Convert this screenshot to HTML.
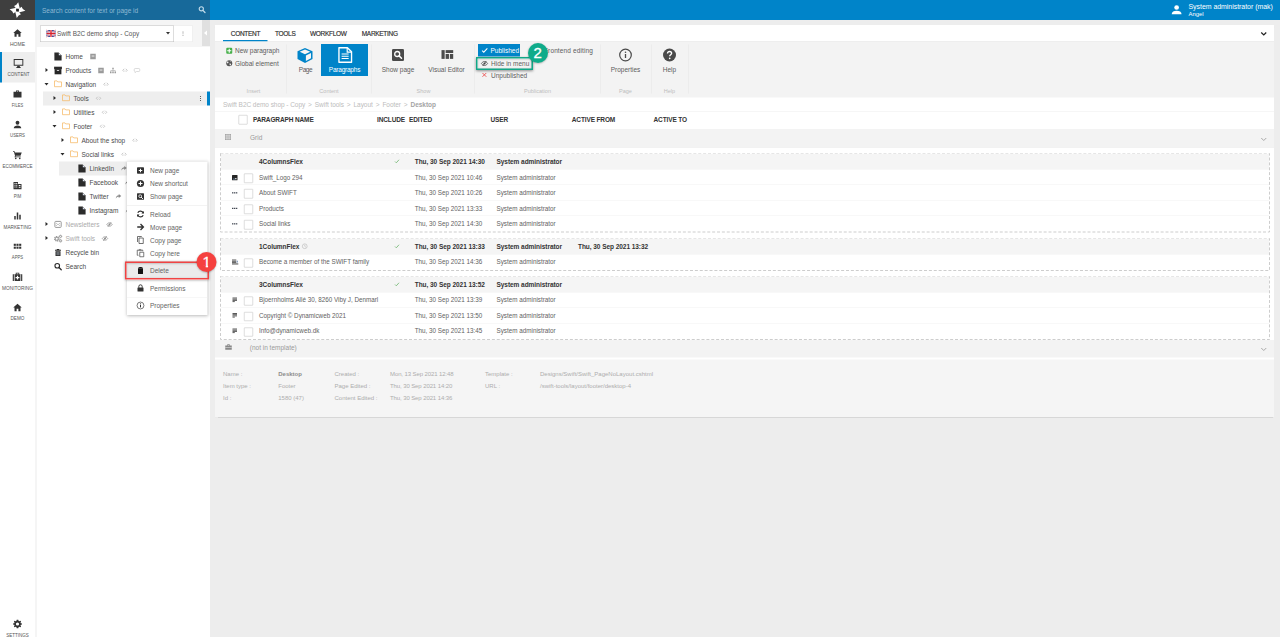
<!DOCTYPE html>
<html lang="en">
<head>
<meta charset="utf-8">
<title>Dynamicweb - Content</title>
<style>

html,body{margin:0;padding:0;overflow:hidden;background:#ededed;width:1280px;height:637px}
#root{position:absolute;left:0;top:0;width:2560px;height:1274px;transform:scale(.5);transform-origin:0 0;font:13px "Liberation Sans",sans-serif;color:#555;overflow:hidden;background:#ededed}
#root *{box-sizing:border-box}
.abs{position:absolute}
svg{display:block;overflow:visible}
/* top bar */
#topbar{position:absolute;left:0;top:0;width:2560px;height:40px;background:#0084c9}
#logo{position:absolute;left:0;top:0;width:70px;height:40px;background:#3f3f3f}
#search{position:absolute;left:70px;top:0;width:350px;height:40px;background:#17699a}
#search span{position:absolute;left:14px;top:13px;font-size:13px;color:#8fb9d3;white-space:nowrap}
#user{position:absolute;left:2377px;top:4px;color:#fff;white-space:nowrap}
#user .n{position:absolute;left:0;top:0;font-size:13.9px;letter-spacing:-.05px}
#user .s{position:absolute;left:0;top:16.5px;font-size:11.8px}
/* nav */
#nav{position:absolute;left:0;top:40px;width:72.5px;height:1234px;background:#fff;border-right:2.5px solid #ebebeb;z-index:2}
.ni{position:absolute;left:0;width:70px;height:61px}
.ni.sel{background:#eee;border-left:4px solid #0084c9}
.ni svg{position:absolute;left:25px;top:13px;width:20px;height:20px}
.ni.sel svg{left:23px}
.ni b{position:absolute;left:0;width:70px;top:39px;line-height:12px;text-align:center;font-weight:400;font-size:10.4px;color:#555;letter-spacing:0}
.ni.sel b{left:0;width:66px}
/* tree panel */
#tree{position:absolute;left:71px;top:40px;width:349px;height:1234px;background:#fff}
#treehead{position:absolute;left:0;top:0;width:349px;height:54px;background:#f5f5f5}
#sel{position:absolute;left:9px;top:10.5px;width:268px;height:33px;background:#fff;border:1px solid #bbb}
#sel span{position:absolute;left:33px;top:8px;white-space:nowrap;color:#555;font-size:12.8px}
#selbtn{position:absolute;left:277px;top:10.5px;width:37px;height:33px;background:#fff;border:1px solid #e6e6e6;border-left:0}
#handle{position:absolute;left:333px;top:0;width:16px;height:52px;background:#e0e0e0}
.tr{position:absolute;left:0;height:28px;width:347px;white-space:nowrap}
.tr .i{position:absolute;top:6px}
.tr .a{position:absolute;width:0;height:0}
.tr .a.r{top:8.7px;border-left:5px solid #2a2a2a;border-top:4.5px solid transparent;border-bottom:4.5px solid transparent}
.tr .a.d{top:11px;border-top:5px solid #2a2a2a;border-left:4.5px solid transparent;border-right:4.5px solid transparent;margin-left:-2px}
.tr .l{position:absolute;top:0;height:28px;display:flex;align-items:center;font-size:13px;color:#4a4a4a}
.tr.dim .l{color:#aaa}
.tr .l svg{margin-left:12px;flex:none}
.tr .l span+svg{margin-left:14px}
.hl{position:absolute;background:#eee;height:28px}

/* main card */
#card{position:absolute;left:430px;top:50px;width:2118px;height:784px;background:#fff;box-shadow:0 1px 1.5px rgba(0,0,0,.09)}
#tabs{position:absolute;left:0;top:0;width:2118px;height:33px;border-bottom:1.5px solid #d2d2d2}
#tabs span{position:absolute;top:9px;font-size:13px;color:#2e2e2e;white-space:nowrap;letter-spacing:-.6px;-webkit-text-stroke:.3px #2e2e2e}
#tabs i{position:absolute;left:16px;top:30px;width:89px;height:3px;background:#0084c9}
#ribbon{position:absolute;left:0;top:33px;width:2118px;height:112px;background:#f3f3f3}
#ribbon .dv{position:absolute;top:6px;width:1px;height:98px;background:#e4e4e4}
#ribbon .gl{position:absolute;top:91.5px;font-size:11px;color:#bdbdbd;white-space:nowrap;transform:translateX(-50%)}
#ribbon .sm{position:absolute;font-size:13px;color:#5c5c5c;white-space:nowrap}
#ribbon .bl{position:absolute;top:49px;font-size:13px;color:#5c5c5c;white-space:nowrap;transform:translateX(-50%)}
#bc{position:absolute;left:16px;top:152px;font-size:13px;color:#bcbcbc;letter-spacing:-.1px;white-space:nowrap;word-spacing:0}
#bc b{color:#a4a4a4}
#bc i{font-style:normal;margin:0 2.4px}
.hline{position:absolute;left:0;width:2118px;height:1px;background:#ececec}
#th span{position:absolute;top:182px;font-size:13px;font-weight:700;color:#333;white-space:nowrap;letter-spacing:-.25px}
.cb{position:absolute;width:18px;height:18.5px;border:1.6px solid #bcbcbc;background:#fff;border-radius:1px}
.band{position:absolute;left:0;width:2118px;background:#f3f3f3}
.band span{position:absolute;font-size:13px;color:#9a9a9a;white-space:nowrap}
.box{position:absolute;left:10px;width:2100px}
.box .bd{position:absolute;left:0;top:0;width:100%;height:100%}
.row{position:absolute;left:2px;right:2px;height:31px;white-space:nowrap;font-size:12.6px;color:#626262}
.row.h{background:linear-gradient(#fff 0,#fff 1.5px,#f5f5f5 1.5px);font-weight:700;color:#333;font-size:13px;letter-spacing:-.1px}
.row+.row{border-top:1px solid #f0f0f0}
.row span{position:absolute;top:8.4px}
.row .c1{left:76px}
.row .c2{left:387.5px}
.row .c3{left:551px}
.row .c4{left:714px}
.row .cb{left:46.3px;top:8px}
.row svg{position:absolute}
#info{position:absolute;left:0;top:668.5px;width:2118px;height:115.5px;background:#f5f5f5;font-size:12px;color:#adadad}
#info span{position:absolute;white-space:nowrap}
#info b{color:#8c8c8c}

/* context menu */
#menu{position:absolute;left:254px;top:323px;width:160.5px;height:307px;background:#fff;box-shadow:0 1px 7px rgba(0,0,0,.28);border-radius:1px}
.mi{position:absolute;left:0;width:100%;height:26px;white-space:nowrap}
.mi svg{position:absolute;left:19px;top:4.5px}
.mi span{position:absolute;left:46px;top:5.5px;font-size:13px;color:#646464}
.ms{position:absolute;left:0;width:100%;height:1px;background:#e6e6e6}

</style>
</head>
<body>
<div id="root">

<!-- ================= TOP BAR ================= -->
<div id="topbar">
  <div id="logo">
    <svg class="abs" style="left:0;top:0" width="70" height="40" viewBox="0 0 70 40"><g transform="translate(35,20.2) rotate(4)" fill="#fff"><path d="M0.4 -15.8 L-3 -10.5 L-7.4 -7.6 L-2.4 -2.4 L4.6 -2.8 Z"/><path d="M0.4 -15.8 L-3 -10.5 L-7.4 -7.6 L-2.4 -2.4 L4.6 -2.8 Z" transform="rotate(90)"/><path d="M0.4 -15.8 L-3 -10.5 L-7.4 -7.6 L-2.4 -2.4 L4.6 -2.8 Z" transform="rotate(180)"/><path d="M0.4 -15.8 L-3 -10.5 L-7.4 -7.6 L-2.4 -2.4 L4.6 -2.8 Z" transform="rotate(270)"/><rect x="-2.4" y="-2.4" width="4.8" height="4.8" fill="#222"/></g></svg>
  </div>
  <div id="search"><span>Search content for text or page id</span>
    <svg class="abs" style="left:327px;top:11.5px" width="14" height="14" viewBox="0 0 14 14"><circle cx="5.6" cy="5.6" r="4.2" fill="none" stroke="#c2dbea" stroke-width="2.2"/><path d="M8.8 8.8 L13 13" stroke="#c2dbea" stroke-width="2.6" stroke-linecap="round"/></svg>
  </div>
  <svg class="abs" style="left:2342px;top:8px" width="22.5" height="22.5" viewBox="0 0 24 24"><circle cx="12" cy="7.5" r="5" fill="#fff"/><path d="M1.5 22 C1.5 16.5 6 14.5 12 14.5 C18 14.5 22.5 16.5 22.5 22 Z" fill="#fff"/></svg>
  <div id="user"><span class="n">System administrator (mak)</span><span class="s">Angel</span></div>
</div>

<!-- ================= LEFT NAV ================= -->
<div id="nav">
  <div class="ni" style="top:3px"><svg viewBox="0 0 20 20"><path d="M10 2.5 L1.5 10 H4 V17.5 H8.2 V12.5 H11.8 V17.5 H16 V10 H18.5 Z" fill="#333"/></svg><b style="transform:scaleX(0.962)">HOME</b></div>
  <div class="ni sel" style="top:64px"><svg viewBox="0 0 20 20"><path d="M0.4 1.2 H19.6 V14.6 H0.4 Z M2.3 3.1 V12.7 H17.7 V3.1 Z" fill="#333" fill-rule="evenodd"/><path d="M8 14.6 H12 L13.4 17.4 H6.6 Z M5.4 17.3 H14.6 V18.8 H5.4 Z" fill="#333"/></svg><b style="transform:scaleX(0.872)">CONTENT</b></div>
  <div class="ni" style="top:125px"><svg viewBox="0 0 20 20"><path d="M7 3 H13 V5.5 H18 V17 H2 V5.5 H7 Z M8.6 4.6 V5.5 H11.4 V4.6 Z" fill="#333" fill-rule="evenodd"/></svg><b style="transform:scaleX(0.782)">FILES</b></div>
  <div class="ni" style="top:186px"><svg viewBox="0 0 20 20"><circle cx="10" cy="6.5" r="3.8" fill="#333"/><path d="M2.5 17.5 C2.5 13.5 6 12 10 12 C14 12 17.5 13.5 17.5 17.5 Z" fill="#333"/></svg><b style="transform:scaleX(0.836)">USERS</b></div>
  <div class="ni" style="top:247px"><svg viewBox="0 0 20 20"><path d="M1 2.5 H4.2 L5 5 H18.5 L16 11.5 H6.5 L6 13 H16.5 V14.5 H4 L5 11.5 L3 4 H1 Z" fill="#333"/><circle cx="6.5" cy="16.8" r="1.6" fill="#333"/><circle cx="14.5" cy="16.8" r="1.6" fill="#333"/></svg><b style="transform:scaleX(0.873)">ECOMMERCE</b></div>
  <div class="ni" style="top:308px"><svg viewBox="0 0 20 20"><path d="M2 3 H11 V7 H18 V17.5 H2 Z" fill="#333"/><g fill="#fff"><rect x="4" y="5" width="2" height="2"/><rect x="7.5" y="5" width="2" height="2"/><rect x="4" y="8.5" width="2" height="2"/><rect x="7.5" y="8.5" width="2" height="2"/><rect x="4" y="12" width="2" height="2"/><rect x="7.5" y="12" width="2" height="2"/><rect x="12.5" y="9" width="3.5" height="2"/><rect x="12.5" y="12.5" width="3.5" height="2"/></g></svg><b style="transform:scaleX(0.81)">PIM</b></div>
  <div class="ni" style="top:369px"><svg viewBox="0 0 20 20"><rect x="3.5" y="10" width="3" height="7" fill="#333"/><rect x="8.5" y="3" width="3" height="14" fill="#333"/><rect x="13.5" y="7.5" width="3" height="9.5" fill="#333"/></svg><b style="transform:scaleX(0.91)">MARKETING</b></div>
  <div class="ni" style="top:430px"><svg viewBox="0 0 20 20"><g fill="#333"><rect x="2.5" y="4.5" width="4.2" height="4.2"/><rect x="7.9" y="4.5" width="4.2" height="4.2"/><rect x="13.3" y="4.5" width="4.2" height="4.2"/><rect x="2.5" y="10.3" width="4.2" height="4.2"/><rect x="7.9" y="10.3" width="4.2" height="4.2"/><rect x="13.3" y="10.3" width="4.2" height="4.2"/></g></svg><b style="transform:scaleX(0.814)">APPS</b></div>
  <div class="ni" style="top:491px"><svg viewBox="0 0 20 20"><path d="M6.5 1.5 H13.5 V4.5 H19.5 V18 H0.5 V4.5 H6.5 Z M8.2 3.2 V4.5 H11.8 V3.2 Z" fill="#333" fill-rule="evenodd"/><rect x="2.8" y="4.5" width="1.4" height="13.5" fill="#fff"/><rect x="15.8" y="4.5" width="1.4" height="13.5" fill="#fff"/><path d="M8.8 7.4 H11.2 V10 H13.8 V12.4 H11.2 V15 H8.8 V12.4 H6.2 V10 H8.8 Z" fill="#fff"/></svg><b style="transform:scaleX(0.924)">MONITORING</b></div>
  <div class="ni" style="top:552px"><svg viewBox="0 0 20 20"><path d="M10 2.5 L1.5 10 H4 V17.5 H8.2 V12.5 H11.8 V17.5 H16 V10 H18.5 Z" fill="#333"/></svg><b style="transform:scaleX(0.897)">DEMO</b></div>
  <div class="ni" style="top:1185px"><svg viewBox="0 0 20 20"><path d="M10 1.5 L11.6 1.6 L12.3 4 L13.8 4.6 L16 3.4 L17.2 4.6 L16 6.8 L16.6 8.3 L19 9 V11 L16.6 11.7 L16 13.2 L17.2 15.4 L16 16.6 L13.8 15.4 L12.3 16 L11.6 18.4 H8.4 L7.7 16 L6.2 15.4 L4 16.6 L2.8 15.4 L4 13.2 L3.4 11.7 L1 11 V9 L3.4 8.3 L4 6.8 L2.8 4.6 L4 3.4 L6.2 4.6 L7.7 4 L8.4 1.6 Z M10 6.8 A3.2 3.2 0 1 0 10 13.2 A3.2 3.2 0 1 0 10 6.8 Z" fill="#333" fill-rule="evenodd"/></svg><b style="transform:scaleX(0.869)">SETTINGS</b></div>
</div>

<!-- ================= TREE PANEL ================= -->
<div id="tree">
  <div id="treehead">
    <div id="sel">
      <svg class="abs" style="left:11.5px;top:8.5px" width="18" height="14" viewBox="0 0 17 13" preserveAspectRatio="none"><rect width="17" height="13" fill="#1b2f8a"/><path d="M0 0 L17 13 M17 0 L0 13" stroke="#fff" stroke-width="2.6"/><path d="M0 0 L17 13 M17 0 L0 13" stroke="#d8202c" stroke-width="1"/><path d="M8.5 0 V13 M0 6.5 H17" stroke="#fff" stroke-width="4.4"/><path d="M8.5 0 V13 M0 6.5 H17" stroke="#d8202c" stroke-width="2.6"/></svg>
      <span>Swift B2C demo shop - Copy</span>
      <i class="abs" style="left:251px;top:12.5px;width:0;height:0;border-top:5px solid #333;border-left:4px solid transparent;border-right:4px solid transparent"></i>
    </div>
    <div id="selbtn"><svg class="abs" style="left:16px;top:10.5px" width="4" height="12" viewBox="0 0 4 12"><circle cx="2" cy="2" r="1.15" fill="#777"/><circle cx="2" cy="5.5" r="1.1" fill="#a5a5a5"/><circle cx="2" cy="9" r="1.1" fill="#a5a5a5"/></svg></div>
    <div id="handle"><i class="abs" style="left:4px;top:21px;width:0;height:0;border-right:6px solid #fff;border-top:5px solid transparent;border-bottom:5px solid transparent"></i></div>
  </div>
  <div class="hl" style="left:15px;top:143px;width:328px"></div>
  <div class="abs" style="left:343px;top:143px;width:6px;height:28px;background:#0084c9"></div>
  <svg class="abs" style="left:328px;top:151px" width="4" height="12" viewBox="0 0 4 12"><circle cx="2" cy="2" r="1.1" fill="#444"/><circle cx="2" cy="6" r="1.1" fill="#444"/><circle cx="2" cy="10" r="1.1" fill="#444"/></svg>
  <div class="hl" style="left:47px;top:283px;width:296px"></div>
  <div class="tr" style="top:59px"><svg class="i" style="left:37px" width="16" height="16" viewBox="0 0 16 16"><path d="M0.8 0 H9.2 L15.2 6 V16.2 H0.8 Z" fill="#2b2b2b"/><path d="M9.6 0.9 V5.7 H14.4 Z" fill="#dfe6f2"/></svg><div class="l" style="left:60px"><span>Home</span><svg width="12" height="12" viewBox="0 0 12 12"><rect x="0.5" y="0.5" width="11" height="11" fill="#9a9a9a"/><rect x="3.2" y="3.2" width="5.6" height="4" fill="#c4c4c4"/></svg></div></div>
  <div class="tr" style="top:87px"><i class="a r" style="left:20px"></i><svg class="i" style="left:37px" width="16" height="16" viewBox="0 0 16 16"><rect x="0.2" y="0.4" width="15.6" height="5" fill="#2b2b2b"/><path d="M1.2 5.2 H14.8 V15.6 H1.2 Z" fill="#262626"/><rect x="5.6" y="7.4" width="4.8" height="1.7" rx=".5" fill="#fff"/></svg><div class="l" style="left:60px"><span>Products</span><svg width="12" height="12" viewBox="0 0 12 12"><rect x="0.5" y="0.5" width="11" height="11" fill="#9a9a9a"/><rect x="3.2" y="3.2" width="5.6" height="4" fill="#c4c4c4"/></svg><svg width="12" height="12" viewBox="0 0 12 12"><g fill="#9a9a9a"><rect x="4.5" y="0.5" width="3" height="3"/><rect x="0" y="8" width="3" height="3.5"/><rect x="4.5" y="8" width="3" height="3.5"/><rect x="9" y="8" width="3" height="3.5"/></g><path d="M6 3.5 V8 M1.5 8 V6 H10.5 V8" fill="none" stroke="#9a9a9a" stroke-width="1"/></svg><svg width="12" height="12" viewBox="0 0 12 12"><path d="M4.3 2.6 L1.5 5.6 L4.3 8.6 M7.7 2.6 L10.5 5.6 L7.7 8.6" fill="none" stroke="#b6b6b6" stroke-width="1.4"/><path d="M4.8 5.6 H7.2" stroke="#d4d4d4" stroke-width="1.2"/></svg><svg width="12" height="12" viewBox="0 0 12 12"><path d="M2.5 2 H9.5 Q11.5 2 11.5 4 V6 Q11.5 8 9.5 8 H5 L2 10.2 V8 Q0.5 7.6 0.5 6 V4 Q0.5 2 2.5 2 Z" fill="none" stroke="#c4c4c4" stroke-width="1.2"/></svg></div></div>
  <div class="tr" style="top:115px"><i class="a d" style="left:20px"></i><svg class="i" style="left:37px" width="16" height="16" viewBox="0 0 16 16"><path d="M1 0.8 H6 L7.5 2.8 H15 V12.4 H1 Z" fill="none" stroke="#f5b866" stroke-width="1.5" stroke-linejoin="round"/></svg><div class="l" style="left:60px"><span>Navigation</span><svg width="12" height="12" viewBox="0 0 12 12"><path d="M4.3 2.6 L1.5 5.6 L4.3 8.6 M7.7 2.6 L10.5 5.6 L7.7 8.6" fill="none" stroke="#b6b6b6" stroke-width="1.4"/><path d="M4.8 5.6 H7.2" stroke="#d4d4d4" stroke-width="1.2"/></svg></div></div>
  <div class="tr" style="top:143px"><i class="a r" style="left:36px"></i><svg class="i" style="left:53px" width="16" height="16" viewBox="0 0 16 16"><path d="M1 0.8 H6 L7.5 2.8 H15 V12.4 H1 Z" fill="none" stroke="#f5b866" stroke-width="1.5" stroke-linejoin="round"/></svg><div class="l" style="left:76px"><span>Tools</span><svg width="12" height="12" viewBox="0 0 12 12"><path d="M4.3 2.6 L1.5 5.6 L4.3 8.6 M7.7 2.6 L10.5 5.6 L7.7 8.6" fill="none" stroke="#b6b6b6" stroke-width="1.4"/><path d="M4.8 5.6 H7.2" stroke="#d4d4d4" stroke-width="1.2"/></svg></div></div>
  <div class="tr" style="top:171px"><i class="a r" style="left:36px"></i><svg class="i" style="left:53px" width="16" height="16" viewBox="0 0 16 16"><path d="M1 0.8 H6 L7.5 2.8 H15 V12.4 H1 Z" fill="none" stroke="#f5b866" stroke-width="1.5" stroke-linejoin="round"/></svg><div class="l" style="left:76px"><span>Utilities</span><svg width="12" height="12" viewBox="0 0 12 12"><path d="M4.3 2.6 L1.5 5.6 L4.3 8.6 M7.7 2.6 L10.5 5.6 L7.7 8.6" fill="none" stroke="#b6b6b6" stroke-width="1.4"/><path d="M4.8 5.6 H7.2" stroke="#d4d4d4" stroke-width="1.2"/></svg></div></div>
  <div class="tr" style="top:199px"><i class="a d" style="left:36px"></i><svg class="i" style="left:53px" width="16" height="16" viewBox="0 0 16 16"><path d="M1 0.8 H6 L7.5 2.8 H15 V12.4 H1 Z" fill="none" stroke="#f5b866" stroke-width="1.5" stroke-linejoin="round"/></svg><div class="l" style="left:76px"><span>Footer</span><svg width="12" height="12" viewBox="0 0 12 12"><path d="M4.3 2.6 L1.5 5.6 L4.3 8.6 M7.7 2.6 L10.5 5.6 L7.7 8.6" fill="none" stroke="#b6b6b6" stroke-width="1.4"/><path d="M4.8 5.6 H7.2" stroke="#d4d4d4" stroke-width="1.2"/></svg></div></div>
  <div class="tr" style="top:227px"><i class="a r" style="left:52px"></i><svg class="i" style="left:69px" width="16" height="16" viewBox="0 0 16 16"><path d="M1 0.8 H6 L7.5 2.8 H15 V12.4 H1 Z" fill="none" stroke="#f5b866" stroke-width="1.5" stroke-linejoin="round"/></svg><div class="l" style="left:92px"><span>About the shop</span><svg width="12" height="12" viewBox="0 0 12 12"><path d="M4.3 2.6 L1.5 5.6 L4.3 8.6 M7.7 2.6 L10.5 5.6 L7.7 8.6" fill="none" stroke="#b6b6b6" stroke-width="1.4"/><path d="M4.8 5.6 H7.2" stroke="#d4d4d4" stroke-width="1.2"/></svg></div></div>
  <div class="tr" style="top:255px"><i class="a d" style="left:52px"></i><svg class="i" style="left:69px" width="16" height="16" viewBox="0 0 16 16"><path d="M1 0.8 H6 L7.5 2.8 H15 V12.4 H1 Z" fill="none" stroke="#f5b866" stroke-width="1.5" stroke-linejoin="round"/></svg><div class="l" style="left:92px"><span>Social links</span><svg width="12" height="12" viewBox="0 0 12 12"><path d="M4.3 2.6 L1.5 5.6 L4.3 8.6 M7.7 2.6 L10.5 5.6 L7.7 8.6" fill="none" stroke="#b6b6b6" stroke-width="1.4"/><path d="M4.8 5.6 H7.2" stroke="#d4d4d4" stroke-width="1.2"/></svg></div></div>
  <div class="tr" style="top:283px"><svg class="i" style="left:85px" width="16" height="16" viewBox="0 0 16 16"><path d="M0.8 0 H9.2 L15.2 6 V16.2 H0.8 Z" fill="#2b2b2b"/><path d="M9.6 0.9 V5.7 H14.4 Z" fill="#dfe6f2"/></svg><div class="l" style="left:108px"><span>LinkedIn</span><svg width="12" height="12" viewBox="0 0 12 12"><path d="M6.5 1 L11.5 5 L6.5 9 V6.6 C3.5 6.6 1.8 7.6 0.6 10.5 C0.6 6 3 3.7 6.5 3.4 Z" fill="#8a8a8a"/></svg></div></div>
  <div class="tr" style="top:311px"><svg class="i" style="left:85px" width="16" height="16" viewBox="0 0 16 16"><path d="M0.8 0 H9.2 L15.2 6 V16.2 H0.8 Z" fill="#2b2b2b"/><path d="M9.6 0.9 V5.7 H14.4 Z" fill="#dfe6f2"/></svg><div class="l" style="left:108px"><span>Facebook</span><svg width="12" height="12" viewBox="0 0 12 12"><path d="M6.5 1 L11.5 5 L6.5 9 V6.6 C3.5 6.6 1.8 7.6 0.6 10.5 C0.6 6 3 3.7 6.5 3.4 Z" fill="#8a8a8a"/></svg></div></div>
  <div class="tr" style="top:339px"><svg class="i" style="left:85px" width="16" height="16" viewBox="0 0 16 16"><path d="M0.8 0 H9.2 L15.2 6 V16.2 H0.8 Z" fill="#2b2b2b"/><path d="M9.6 0.9 V5.7 H14.4 Z" fill="#dfe6f2"/></svg><div class="l" style="left:108px"><span>Twitter</span><svg width="12" height="12" viewBox="0 0 12 12"><path d="M6.5 1 L11.5 5 L6.5 9 V6.6 C3.5 6.6 1.8 7.6 0.6 10.5 C0.6 6 3 3.7 6.5 3.4 Z" fill="#8a8a8a"/></svg></div></div>
  <div class="tr" style="top:367px"><svg class="i" style="left:85px" width="16" height="16" viewBox="0 0 16 16"><path d="M0.8 0 H9.2 L15.2 6 V16.2 H0.8 Z" fill="#2b2b2b"/><path d="M9.6 0.9 V5.7 H14.4 Z" fill="#dfe6f2"/></svg><div class="l" style="left:108px"><span>Instagram</span><svg width="12" height="12" viewBox="0 0 12 12"><path d="M6.5 1 L11.5 5 L6.5 9 V6.6 C3.5 6.6 1.8 7.6 0.6 10.5 C0.6 6 3 3.7 6.5 3.4 Z" fill="#8a8a8a"/></svg></div></div>
  <div class="tr dim" style="top:395px"><i class="a r" style="left:20px"></i><svg class="i" style="left:37px" width="16" height="16" viewBox="0 0 16 16"><rect x="1.8" y="1.8" width="12.6" height="12" rx="1.6" fill="none" stroke="#9a9a9a" stroke-width="2"/><path d="M4 5 L8.1 8.6 L12.2 5 M4 11 L6.6 8.2 M12.2 11 L9.6 8.2" fill="none" stroke="#a8a8a8" stroke-width="1.3"/></svg><div class="l" style="left:60px"><span>Newsletters</span><svg width="12" height="12" viewBox="0 0 12 12"><path d="M0.6 6 C2.3 3.2 4 2.6 6 2.6 C8 2.6 9.7 3.2 11.4 6 C9.7 8.8 8 9.4 6 9.4 C4 9.4 2.3 8.8 0.6 6 Z" fill="none" stroke="#8c8c8c" stroke-width="1.4"/><circle cx="6" cy="6" r="2" fill="#8c8c8c"/><path d="M2.6 10.6 L9.4 1.4" stroke="#8c8c8c" stroke-width="1.4"/></svg></div></div>
  <div class="tr dim" style="top:423px"><i class="a r" style="left:20px"></i><svg class="i" style="left:37px" width="16" height="16" viewBox="0 0 16 16"><circle cx="5.6" cy="8.6" r="4.4" fill="none" stroke="#8e8e8e" stroke-width="2.2" stroke-dasharray="2.3 1.15"/><circle cx="5.6" cy="8.6" r="2.9" fill="none" stroke="#8e8e8e" stroke-width="1.7"/><circle cx="13" cy="3.8" r="2" fill="none" stroke="#8e8e8e" stroke-width="1.7"/><circle cx="13" cy="12.6" r="2" fill="none" stroke="#8e8e8e" stroke-width="1.7"/><circle cx="13" cy="3.8" r="2.9" fill="none" stroke="#8e8e8e" stroke-width="1" stroke-dasharray="1.2 1.1"/><circle cx="13" cy="12.6" r="2.9" fill="none" stroke="#8e8e8e" stroke-width="1" stroke-dasharray="1.2 1.1"/></svg><div class="l" style="left:60px"><span>Swift tools</span><svg width="12" height="12" viewBox="0 0 12 12"><path d="M0.6 6 C2.3 3.2 4 2.6 6 2.6 C8 2.6 9.7 3.2 11.4 6 C9.7 8.8 8 9.4 6 9.4 C4 9.4 2.3 8.8 0.6 6 Z" fill="none" stroke="#8c8c8c" stroke-width="1.4"/><circle cx="6" cy="6" r="2" fill="#8c8c8c"/><path d="M2.6 10.6 L9.4 1.4" stroke="#8c8c8c" stroke-width="1.4"/></svg></div></div>
  <div class="tr" style="top:451px"><svg class="i" style="left:37px" width="16" height="16" viewBox="0 0 16 16"><path d="M5.5 1 H10.5 V2.5 H14 V4.5 H2 V2.5 H5.5 Z" fill="#2b2b2b"/><path d="M3 5.5 H13 V15 H3 Z" fill="#2b2b2b"/><path d="M6 7 V13.5 M8 7 V13.5 M10 7 V13.5" stroke="#a9b4bc" stroke-width="1.2"/></svg><div class="l" style="left:60px"><span>Recycle bin</span></div></div>
  <div class="tr" style="top:479px"><svg class="i" style="left:37px" width="16" height="16" viewBox="0 0 16 16"><circle cx="6.5" cy="6.5" r="4.6" fill="none" stroke="#2b2b2b" stroke-width="2.2"/><path d="M10 10 L14.5 14.5" stroke="#2b2b2b" stroke-width="2.6" stroke-linecap="round"/></svg><div class="l" style="left:60px"><span>Search</span></div></div>
</div>


<!-- ================= MAIN CARD ================= -->
<div id="card">
  <div id="tabs">
    <span style="left:31.5px">CONTENT</span><span style="left:120px">TOOLS</span><span style="left:190px">WORKFLOW</span><span style="left:293.5px">MARKETING</span>
    <i></i>
    <svg class="abs" style="left:2091px;top:13px" width="13" height="9" viewBox="0 0 13 9"><path d="M1.5 2 L6.5 7 L11.5 2" fill="none" stroke="#222" stroke-width="2.4"/></svg>
  </div>
  
  <div id="ribbon">
    <svg class="abs" style="left:22px;top:12px" width="13" height="13" viewBox="0 0 13 13"><rect x="0.5" y="0.5" width="12" height="12" rx="2" fill="#46b04a"/><path d="M6.5 2.6 V10.4 M2.4 6.5 H10.6" stroke="#fff" stroke-width="2.2"/></svg><span class="sm" style="left:40px;top:11px">New paragraph</span>
    <svg class="abs" style="left:22px;top:37px" width="13" height="13" viewBox="0 0 13 13"><circle cx="6.5" cy="6.5" r="6" fill="#555"/><path d="M3 2.5 C5 3 5.5 4.5 4.5 6 C3.8 7 2.5 6.8 1.5 6 M7.5 1.5 C8 3.5 10 3.5 11 3 M7 7 C8.5 6.5 10.5 7.5 10 9.5 C9.5 11 8 11.5 7.5 10 C7.2 9 6.5 8 7 7 Z" fill="#f3f3f3"/></svg><span class="sm" style="left:40px;top:36px">Global element</span>
    <span class="gl" style="left:77px">Insert</span>
    <i class="dv" style="left:143px"></i>
    <svg class="abs" style="left:164px;top:12px" width="32" height="32" viewBox="0 0 32 32"><path d="M16 0.8 L31 7.4 V23 L16 31 L1 23 V7.4 Z" fill="#0084c9"/><path d="M16 3.8 L26.6 8.4 L16 13.4 L5.4 8.4 Z" fill="#f6f6f6"/><path d="M17.8 16.2 L28 11.2 V21.6 L17.8 27.2 Z" fill="#f6f6f6"/></svg><span class="bl" style="left:181px;letter-spacing:-.8px">Page</span>
    <div class="abs" style="left:212px;top:5px;width:94px;height:64px;background:#0084c9"></div>
    <svg class="abs" style="left:245.5px;top:11px" width="29" height="32" viewBox="0 0 29 33"><path d="M1.5 1.5 H19 L27.5 10 V31.5 H1.5 Z" fill="none" stroke="#fff" stroke-width="2.8" stroke-linejoin="round"/><path d="M18.5 2 V10.5 H27" fill="none" stroke="#fff" stroke-width="2.4"/><path d="M7 14.5 H21.5 M7 19.2 H21.5 M7 23.9 H21.5" stroke="#fff" stroke-width="2.2"/></svg><span class="bl" style="left:259px;color:#fff;letter-spacing:-.45px">Paragraphs</span>
    <span class="gl" style="left:228px">Content</span>
    <i class="dv" style="left:313px"></i>
    <svg class="abs" style="left:354px;top:15px" width="24" height="24" viewBox="0 0 24 24"><rect x="0" y="0" width="24" height="24" rx="2.5" fill="#4a4a4a"/><circle cx="10.4" cy="10" r="5" fill="none" stroke="#fff" stroke-width="2.6"/><path d="M14.2 13.8 L19 18.6" stroke="#fff" stroke-width="3" stroke-linecap="round"/></svg><span class="bl" style="left:366px">Show page</span>
    <svg class="abs" style="left:453px;top:17px" width="23.4" height="18" viewBox="0 0 24 18"><g fill="#4a4a4a"><rect x="0" y="0" width="6.5" height="18"/><rect x="8.5" y="0" width="15.5" height="6"/><rect x="8.5" y="8" width="6.8" height="10"/><rect x="17.2" y="8" width="6.8" height="10"/></g></svg><span class="bl" style="left:463px">Visual Editor</span>
    <span class="gl" style="left:417px">Show</span>
    <i class="dv" style="left:518px"></i>
    <div class="abs" style="left:526px;top:5px;width:84px;height:25px;background:#0084c9"></div>
    <svg class="abs" style="left:533px;top:12px" width="13.5" height="11" viewBox="0 0 12 10"><path d="M1 5.5 L4 8.5 L10.5 1.5" fill="none" stroke="#fff" stroke-width="1.9"/></svg><span class="sm" style="left:551px;top:11px;color:#fff">Published</span>
    <svg class="abs" style="left:532px;top:38px" width="14" height="12" viewBox="0 0 14 12"><path d="M0.8 6 C3 2.6 5 2 7 2 C9 2 11 2.6 13.2 6 C11 9.4 9 10 7 10 C5 10 3 9.4 0.8 6 Z" fill="none" stroke="#444" stroke-width="1.5"/><circle cx="7" cy="6" r="2.2" fill="#444"/><path d="M3.4 11 L10.6 1" stroke="#444" stroke-width="1.5"/></svg><span class="sm" style="left:552px;top:36px">Hide in menu</span>
    <svg class="abs" style="left:534px;top:62px" width="9.5" height="9.5" viewBox="0 0 10 10"><path d="M1 1 L9 9 M9 1 L1 9" stroke="#ec5050" stroke-width="1.9"/></svg><span class="sm" style="left:552px;top:60px">Unpublished</span>
    <span class="sm" style="left:658px;top:11px;letter-spacing:.25px">Frontend editing</span>
    <span class="gl" style="left:645px">Publication</span>
    <i class="dv" style="left:770px"></i>
    <svg class="abs" style="left:808px;top:14px" width="26" height="26" viewBox="0 0 26 26"><circle cx="13" cy="13" r="11.6" fill="none" stroke="#4a4a4a" stroke-width="2.4"/><rect x="11.7" y="11" width="2.6" height="8" fill="#4a4a4a"/><circle cx="13" cy="7.6" r="1.6" fill="#4a4a4a"/></svg><span class="bl" style="left:821px">Properties</span>
    <span class="gl" style="left:821px">Page</span>
    <i class="dv" style="left:872px"></i>
    <svg class="abs" style="left:896px;top:14px" width="26" height="26" viewBox="0 0 26 26"><circle cx="13" cy="13" r="13" fill="#4a4a4a"/><path d="M9 10 C9 7.4 10.8 6 13.1 6 C15.5 6 17.2 7.4 17.2 9.6 C17.2 12.6 13.4 12.6 13.4 15.6" fill="none" stroke="#fff" stroke-width="2.8"/><circle cx="13.4" cy="19.6" r="1.7" fill="#fff"/></svg><span class="bl" style="left:909px">Help</span>
    <span class="gl" style="left:909px">Help</span>
    <i class="dv" style="left:947px"></i>
  </div>
  <div id="bc">Swift B2C demo shop - Copy <i>&gt;</i> Swift tools <i>&gt;</i> Layout <i>&gt;</i> Footer <i>&gt;</i> <b>Desktop</b></div>
  <div class="hline" style="top:172px"></div>
  <div id="th">
    <i class="cb" style="left:46.5px;top:180px"></i>
    <span style="left:76px">PARAGRAPH NAME</span><span style="left:324px">INCLUDE</span><span style="left:388px">EDITED</span><span style="left:551px">USER</span><span style="left:713.5px">ACTIVE FROM</span><span style="left:877px">ACTIVE TO</span>
  </div>
  <div class="band" style="top:208px;height:37px;border-bottom:1px solid #ebebeb"><svg class="abs" style="left:20px;top:10px" width="12" height="12" viewBox="0 0 12 12"><rect x="0.6" y="0.6" width="10.8" height="10.8" fill="none" stroke="#999" stroke-width="1.2"/><path d="M0.6 4.2 H11.4 M0.6 7.8 H11.4 M4.2 0.6 V11.4 M7.8 0.6 V11.4" stroke="#999" stroke-width="1"/></svg><span style="left:70px;top:9.5px">Grid</span><svg class="abs" style="left:2090.5px;top:16px" width="13" height="9" viewBox="0 0 13 9"><path d="M1.5 2 L6.5 7 L11.5 2" fill="none" stroke="#9c9c9c" stroke-width="1.7"/></svg></div>
  <div class="box" style="top:256.3px;height:159px"><svg class="bd" width="2100" height="159" viewBox="0 0 2100 159"><rect x="1" y="1" width="2098" height="157" fill="none" stroke="#cdcdcd" stroke-width="2" stroke-dasharray="6 3.75"/></svg>
    <div class="row h" style="top:1px"><span class="c1">4ColumnsFlex</span><svg style="left:347px;top:11px" width="10" height="9" viewBox="0 0 10 9"><path d="M1 5 L3.6 7.6 L9 1.5" fill="none" stroke="#6db56d" stroke-width="1.6"/></svg><span class="c2">Thu, 30 Sep 2021 14:30</span><span class="c3">System administrator</span></div>
    <div class="row" style="top:32px"><svg style="left:22px;top:10.5px" width="11" height="10" viewBox="0 0 11 10"><rect x="0" y="0" width="11" height="10.4" rx="1" fill="#262626"/><path d="M1.6 8.8 L4 5.8 L6 8.8 Z" fill="#6b8cab"/><rect x="6.4" y="6" width="2.6" height="2.6" fill="#f2f2f2"/></svg><i class="cb"></i><span class="c1">Swift_Logo 294</span><span class="c2">Thu, 30 Sep 2021 10:46</span><span class="c3">System administrator</span></div>
    <div class="row" style="top:63px"><svg style="left:22px;top:10.5px" width="11" height="10" viewBox="0 0 11 10"><rect x="0" y="3.6" width="2.8" height="2.2" fill="#303642"/><rect x="3.9" y="3.6" width="2.8" height="2.2" fill="#303642"/><rect x="7.8" y="3.6" width="2.8" height="2.2" fill="#303642"/></svg><i class="cb"></i><span class="c1">About SWIFT</span><span class="c2">Thu, 30 Sep 2021 10:26</span><span class="c3">System administrator</span></div>
    <div class="row" style="top:94px"><svg style="left:22px;top:10.5px" width="11" height="10" viewBox="0 0 11 10"><rect x="0" y="3.6" width="2.8" height="2.2" fill="#303642"/><rect x="3.9" y="3.6" width="2.8" height="2.2" fill="#303642"/><rect x="7.8" y="3.6" width="2.8" height="2.2" fill="#303642"/></svg><i class="cb"></i><span class="c1">Products</span><span class="c2">Thu, 30 Sep 2021 13:33</span><span class="c3">System administrator</span></div>
    <div class="row" style="top:125px"><svg style="left:22px;top:10.5px" width="11" height="10" viewBox="0 0 11 10"><rect x="0" y="3.6" width="2.8" height="2.2" fill="#303642"/><rect x="3.9" y="3.6" width="2.8" height="2.2" fill="#303642"/><rect x="7.8" y="3.6" width="2.8" height="2.2" fill="#303642"/></svg><i class="cb"></i><span class="c1">Social links</span><span class="c2">Thu, 30 Sep 2021 14:30</span><span class="c3">System administrator</span></div>
  </div>
  <div class="box" style="top:425.6px;height:66px"><svg class="bd" width="2100" height="66" viewBox="0 0 2100 66"><rect x="1" y="1" width="2098" height="64" fill="none" stroke="#cdcdcd" stroke-width="2" stroke-dasharray="6 3.75"/></svg>
    <div class="row h" style="top:1px"><span class="c1">1ColumnFlex<svg style="display:inline-block;margin-left:5px;vertical-align:-1px;position:static" width="11" height="11" viewBox="0 0 11 11"><circle cx="5.5" cy="5.5" r="4.8" fill="none" stroke="#aaa" stroke-width="1"/><path d="M5.5 2.5 V5.5 L7.8 7.4" fill="none" stroke="#aaa" stroke-width="1"/></svg></span><svg style="left:347px;top:11px" width="10" height="9" viewBox="0 0 10 9"><path d="M1 5 L3.6 7.6 L9 1.5" fill="none" stroke="#6db56d" stroke-width="1.6"/></svg><span class="c2">Thu, 30 Sep 2021 13:33</span><span class="c3">System administrator</span><span class="c4">Thu, 30 Sep 2021 13:32</span></div>
    <div class="row" style="top:32px"><svg style="left:22px;top:10.5px" width="11" height="10" viewBox="0 0 11 10"><g fill="#5a5a5a"><rect x="0" y="0" width="8.6" height="2"/><rect x="0" y="2.6" width="8.6" height="2"/><rect x="0" y="5.2" width="8.6" height="2"/><rect x="0" y="7.8" width="12.6" height="2.2"/><rect x="9.4" y="2.4" width="2.6" height="3.6" fill="#8aa0c0"/></g></svg><i class="cb"></i><span class="c1">Become a member of the SWIFT family</span><span class="c2">Thu, 30 Sep 2021 14:36</span><span class="c3">System administrator</span></div>
  </div>
  <div class="box" style="top:501.8px;height:128px"><svg class="bd" width="2100" height="128" viewBox="0 0 2100 128"><rect x="1" y="1" width="2098" height="126" fill="none" stroke="#cdcdcd" stroke-width="2" stroke-dasharray="6 3.75"/></svg>
    <div class="row h" style="top:1px"><span class="c1">3ColumnsFlex</span><svg style="left:347px;top:11px" width="10" height="9" viewBox="0 0 10 9"><path d="M1 5 L3.6 7.6 L9 1.5" fill="none" stroke="#6db56d" stroke-width="1.6"/></svg><span class="c2">Thu, 30 Sep 2021 13:52</span><span class="c3">System administrator</span></div>
    <div class="row" style="top:32px"><svg style="left:22px;top:10.5px" width="11" height="10" viewBox="0 0 11 10"><g fill="#5a5a5a"><rect x="1" y="0" width="9" height="2"/><rect x="1" y="2.4" width="9" height="2"/><rect x="1" y="4.8" width="9" height="2"/><rect x="1" y="7.2" width="4.6" height="2"/></g></svg><i class="cb"></i><span class="c1">Bjoernholms Allé 30, 8260 Viby J, Denmarl</span><span class="c2">Thu, 30 Sep 2021 13:39</span><span class="c3">System administrator</span></div>
    <div class="row" style="top:63px"><svg style="left:22px;top:10.5px" width="11" height="10" viewBox="0 0 11 10"><g fill="#5a5a5a"><rect x="1" y="0" width="9" height="2"/><rect x="1" y="2.4" width="9" height="2"/><rect x="1" y="4.8" width="9" height="2"/><rect x="1" y="7.2" width="4.6" height="2"/></g></svg><i class="cb"></i><span class="c1">Copyright © Dynamicweb 2021</span><span class="c2">Thu, 30 Sep 2021 13:50</span><span class="c3">System administrator</span></div>
    <div class="row" style="top:94px"><svg style="left:22px;top:10.5px" width="11" height="10" viewBox="0 0 11 10"><g fill="#5a5a5a"><rect x="1" y="0" width="9" height="2"/><rect x="1" y="2.4" width="9" height="2"/><rect x="1" y="4.8" width="9" height="2"/><rect x="1" y="7.2" width="4.6" height="2"/></g></svg><i class="cb"></i><span class="c1">Info@dynamicweb.dk</span><span class="c2">Thu, 30 Sep 2021 13:45</span><span class="c3">System administrator</span></div>
  </div>
  <div class="band" style="top:629.8px;height:35px"><svg class="abs" style="left:20px;top:8.6px" width="14" height="12" viewBox="0 0 14 12"><path d="M4.5 0.5 H9.5 V3 H13.5 V11.5 H0.5 V3 H4.5 Z M5.8 1.8 V3 H8.2 V1.8 Z" fill="#888" fill-rule="evenodd"/><rect x="0.5" y="6.2" width="13" height="1" fill="#f3f3f3"/></svg><span style="left:69.5px;top:8.5px">(not in template)</span><svg class="abs" style="left:2090.5px;top:14.5px" width="13" height="9" viewBox="0 0 13 9"><path d="M1.5 2 L6.5 7 L11.5 2" fill="none" stroke="#9c9c9c" stroke-width="1.7"/></svg></div>
  <div id="info">
    <span style="left:16px;top:21.5px">Name :</span><span style="left:126.5px;top:21.5px"><b>Desktop</b></span><span style="left:239px;top:21.5px">Created :</span><span style="left:350px;top:21.5px;letter-spacing:-.2px">Mon, 13 Sep 2021 12:48</span><span style="left:540px;top:21.5px">Template :</span><span style="left:650px;top:21.5px">Designs/Swift/Swift_PageNoLayout.cshtml</span>
    <span style="left:16px;top:45.5px">Item type :</span><span style="left:126.5px;top:45.5px">Footer</span><span style="left:239px;top:45.5px">Page Edited :</span><span style="left:350px;top:45.5px;letter-spacing:-.2px">Thu, 30 Sep 2021 14:20</span><span style="left:540px;top:45.5px">URL :</span><span style="left:650px;top:45.5px">/swift-tools/layout/footer/desktop-4</span>
    <span style="left:16px;top:69.5px">Id :</span><span style="left:126.5px;top:69.5px">1580 (47)</span><span style="left:239px;top:69.5px">Content Edited :</span><span style="left:350px;top:69.5px;letter-spacing:-.2px">Thu, 30 Sep 2021 14:36</span>
  </div>
</div>
<!-- annotation 2 -->
<div class="abs" style="left:952px;top:114px;width:114px;height:26px;border:3px solid #12a787;box-shadow:0 1px 5px rgba(0,0,0,.42),inset 0 1px 4px rgba(0,0,0,.3)"></div>
<div class="abs" style="left:1055.5px;top:85.8px;width:40px;height:40px;border-radius:50%;background:#0fab8a;box-shadow:0 1px 4px rgba(0,0,0,.3);color:#fff;font-size:30px;line-height:40px;text-align:center;-webkit-text-stroke:.6px #fff">2</div>


<!-- ================= CONTEXT MENU ================= -->
<div id="menu">
  <div class="abs" style="left:0;top:202.5px;width:100%;height:31px;background:#ebebeb"></div>
  <div class="mi" style="top:5.5px"><svg width="16" height="16" viewBox="0 0 16 16"><rect x="1" y="1.5" width="14" height="13" rx="1.5" fill="#333"/><path d="M8 4.5 V11.5 M4.5 8 H11.5" stroke="#fff" stroke-width="2"/></svg><span>New page</span></div>
  <div class="mi" style="top:31.5px"><svg width="16" height="16" viewBox="0 0 16 16"><circle cx="8" cy="8" r="7.2" fill="#333"/><path d="M8 4 V12 M4 8 H12" stroke="#fff" stroke-width="2.2"/></svg><span>New shortcut</span></div>
  <div class="mi" style="top:57.5px"><svg width="16" height="16" viewBox="0 0 16 16"><rect x="1" y="1.5" width="14" height="13" rx="1" fill="#333"/><circle cx="7.4" cy="7.4" r="2.8" fill="none" stroke="#fff" stroke-width="1.6"/><path d="M9.6 9.6 L12.4 12.4" stroke="#fff" stroke-width="1.9" stroke-linecap="round"/></svg><span>Show page</span></div>
  <div class="mi" style="top:92.5px"><svg width="16" height="16" viewBox="0 0 16 16"><path d="M13.6 6.2 A6 6 0 0 0 2.6 5.4" fill="none" stroke="#333" stroke-width="2.6"/><path d="M2.4 9.8 A6 6 0 0 0 13.4 10.6" fill="none" stroke="#333" stroke-width="2.6"/><path d="M15 1.8 V7 H9.8 Z" fill="#333"/><path d="M1 14.2 V9 H6.2 Z" fill="#333"/></svg><span>Reload</span></div>
  <div class="mi" style="top:118.5px"><svg width="16" height="16" viewBox="0 0 16 16"><path d="M1.5 8 H13 M8 2.2 L13.8 8 L8 13.8" fill="none" stroke="#333" stroke-width="2.7"/></svg><span>Move page</span></div>
  <div class="mi" style="top:144.5px"><svg width="16" height="16" viewBox="0 0 16 16"><path d="M5 4 H13.5 V15 H5 Z" fill="none" stroke="#444" stroke-width="1.5" stroke-linejoin="round"/><path d="M2 12 V1 H10.5" fill="none" stroke="#444" stroke-width="1.5" stroke-linejoin="round"/></svg><span>Copy page</span></div>
  <div class="mi" style="top:170.5px"><svg width="16" height="16" viewBox="0 0 16 16"><path d="M6.5 6.5 H14.5 V15.5 H6.5 Z" fill="none" stroke="#444" stroke-width="1.4" stroke-linejoin="round"/><path d="M4 12.5 H1.5 V2.2 H4.2 M9.8 2.2 H12.5 V4.5" fill="none" stroke="#444" stroke-width="1.4" stroke-linejoin="round"/><path d="M4.5 3.2 V1.6 Q7 -0.6 9.5 1.6 V3.2 Z" fill="none" stroke="#444" stroke-width="1.3"/></svg><span>Copy here</span></div>
  <div class="mi" style="top:205.5px"><svg width="16" height="16" viewBox="0 0 16 16"><rect x="3" y="2.2" width="10" height="12.8" rx="1.2" fill="#111"/><rect x="5.5" y="1" width="5" height="2" fill="#111"/><rect x="3" y="3.6" width="10" height=".8" fill="#ebebeb" opacity=".55"/></svg><span>Delete</span></div>
  <div class="mi" style="top:240.5px"><svg width="16" height="16" viewBox="0 0 16 16"><rect x="2" y="7" width="12" height="8" rx="1" fill="#333"/><path d="M4.6 7.5 V5 A3.4 3.4 0 0 1 11.4 5 V7.5" fill="none" stroke="#333" stroke-width="1.9"/></svg><span>Permissions</span></div>
  <div class="mi" style="top:275.5px"><svg width="16" height="16" viewBox="0 0 16 16"><circle cx="8" cy="8" r="6.9" fill="none" stroke="#444" stroke-width="1.4"/><rect x="7" y="7" width="2" height="4.8" fill="#333"/><circle cx="8" cy="4.7" r="1.25" fill="#333"/></svg><span>Properties</span></div>
  <div class="ms" style="top:88px"></div>
  <div class="ms" style="top:271px;background:#efefef"></div>
</div>
<!-- annotation 1 -->
<div class="abs" style="left:250px;top:523px;width:168px;height:36px;border:3px solid #f04343;box-shadow:0 1px 5px rgba(0,0,0,.4),inset 0 1px 4px rgba(0,0,0,.25)"></div>
<div class="abs" style="left:393.4px;top:503.6px;width:40px;height:40px;border-radius:50%;background:#f5413f;box-shadow:0 1px 4px rgba(0,0,0,.3);color:#fff;font-size:30px;line-height:40px;text-align:center;-webkit-text-stroke:.6px #fff"><span style="display:inline-block;height:40px;clip-path:polygon(0 0,11.2px 0,11.2px 40px,6.4px 40px,6.4px 26.8px,0 26.8px)">1</span></div>

</div>
</body>
</html>
